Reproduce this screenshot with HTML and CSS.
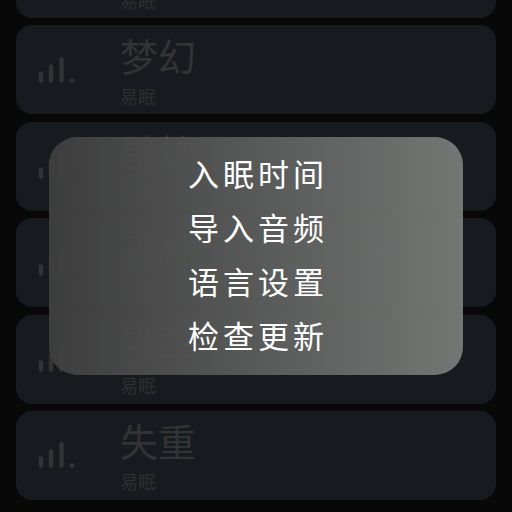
FILE: index.html
```
<!DOCTYPE html>
<html lang="zh-CN">
<head>
  <meta charset="UTF-8">
  <meta name="viewport" content="width=device-width, initial-scale=1.0">
  <title>易眠</title>
  <link rel="stylesheet" href="styles.css">
</head>
<body>
  <svg width="0" height="0" class="sprite">
    <symbol id="bars" viewBox="0 0 38 28">
      <path d="M3 17.500V24.500M13 10.500V24.500M23.500 3V24.500" fill="none" stroke="currentColor" stroke-width="4.500" stroke-linecap="round"/>
      <circle cx="34" cy="24.500" r="2.300" fill="currentColor"/>
    </symbol>
  </svg>

  <main class="screen">
    <ul class="sound-list">
      <li class="sound-card">
        <svg class="sound-icon"><use href="#bars"/></svg>
        <div class="sound-text"><h2>雨声</h2><p>易眠</p></div>
      </li>
      <li class="sound-card">
        <svg class="sound-icon"><use href="#bars"/></svg>
        <div class="sound-text"><h2>梦幻</h2><p>易眠</p></div>
      </li>
      <li class="sound-card">
        <svg class="sound-icon"><use href="#bars"/></svg>
        <div class="sound-text"><h2>壁炉</h2><p>易眠</p></div>
      </li>
      <li class="sound-card">
        <svg class="sound-icon"><use href="#bars"/></svg>
        <div class="sound-text"><h2>森林</h2><p>易眠</p></div>
      </li>
      <li class="sound-card">
        <svg class="sound-icon"><use href="#bars"/></svg>
        <div class="sound-text"><h2>铁车</h2><p>易眠</p></div>
      </li>
      <li class="sound-card">
        <svg class="sound-icon"><use href="#bars"/></svg>
        <div class="sound-text"><h2>失重</h2><p>易眠</p></div>
      </li>
    </ul>

    <div class="overlay">
      <nav class="menu">
        <button type="button">入眠时间</button>
        <button type="button">导入音频</button>
        <button type="button">语言设置</button>
        <button type="button">检查更新</button>
      </nav>
    </div>
  </main>
</body>
</html>
```

FILE: styles.css
```
* {
  box-sizing: border-box;
  margin: 0;
  padding: 0;
}

body {
  background: #080808;
  font-family: "Noto Sans CJK SC", sans-serif;
}

.sprite {
  display: none;
}

.screen {
  position: relative;
  height: 100vh;
  overflow: hidden;
}

/* the list is scrolled part way past its first card */
.sound-list {
  display: flex;
  flex-direction: column;
  justify-content: space-between;
  height: calc(100vh + 71px);
  margin-top: -71px;
  padding: 0 16px 12px;
  list-style: none;
}

.sound-card {
  display: flex;
  align-items: center;
  gap: 44px;
  height: 89px;
  padding: 0 22px;
  background: #171b1f;
  border-radius: 16px;
  color: #333;
}

.sound-icon {
  width: 38px;
  height: 28px;
}

.sound-text h2 {
  font-size: 38px;
  line-height: 46px;
  font-weight: 400;
}

.sound-text p {
  margin-top: 6px;
  font-size: 18px;
  line-height: 24px;
  color: #2e2e2e;
}

.overlay {
  position: absolute;
  inset: 0;
  display: flex;
  align-items: center;
  justify-content: center;
}

.menu {
  display: flex;
  flex-direction: column;
  align-items: center;
  width: 81%;
  padding: 8px 0 14px;
  background: linear-gradient(90deg, rgba(62, 63, 62, 0.94), rgba(122, 124, 122, 0.94));
  border-radius: 28px;
}

.menu button {
  height: 54px;
  padding-left: 4px;
  border: none;
  background: none;
  color: #fff;
  font-family: inherit;
  font-size: 31px;
  letter-spacing: 4px;
  cursor: pointer;
}
```
